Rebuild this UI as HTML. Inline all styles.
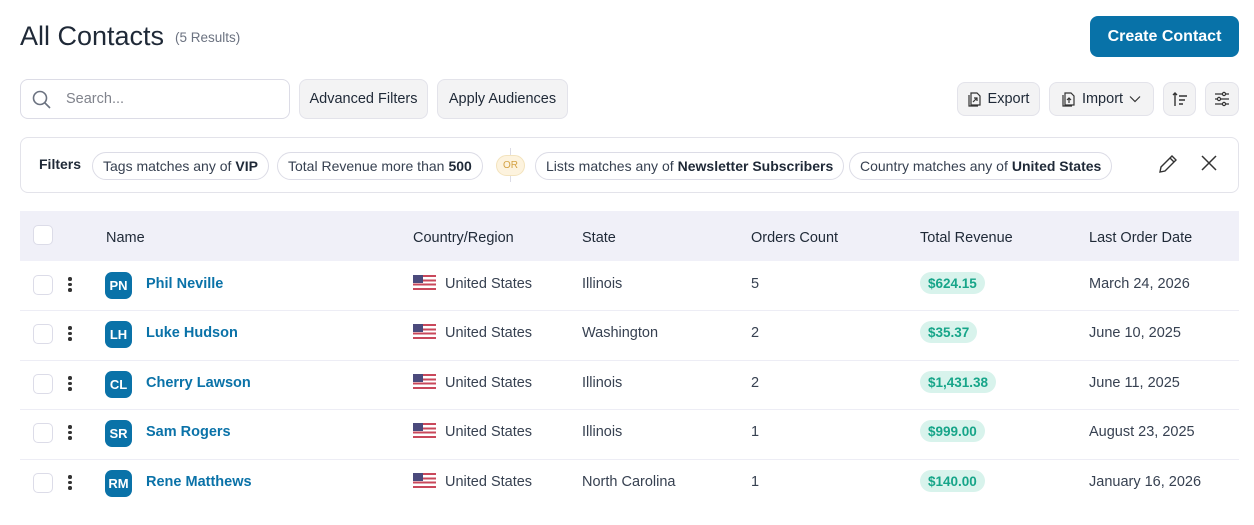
<!DOCTYPE html>
<html><head><style>
*{box-sizing:border-box;margin:0;padding:0}
body{width:1254px;height:525px;background:#fff;font-family:"Liberation Sans",sans-serif;color:#1f2937;position:relative;overflow:hidden}
.a{position:absolute}
.btn{position:absolute;background:#f3f3f4;border:1px solid #e3e3ea;border-radius:8px;font-size:14.5px;color:#1f2937;display:flex;align-items:center;justify-content:center;gap:6px}
.chip{position:absolute;top:152px;height:28px;border:1px solid #dcdce6;border-radius:14px;font-size:14px;color:#374151;display:flex;align-items:center;padding:0 10px;white-space:nowrap}
.chip b{color:#1f2937;margin-left:4px}
.cb{position:absolute;left:33px;width:20px;height:20px;border:1.5px solid #dcdce8;border-radius:5px;background:#fff}
.dots{position:absolute;left:68px;width:4px}
.dots i{display:block;width:3.5px;height:3.5px;background:#333;border-radius:50%;margin-bottom:2px}
.av{position:absolute;left:105px;width:27px;height:27px;background:#0a72a8;border-radius:7px;color:#fff;font-size:13px;font-weight:bold;display:flex;align-items:center;justify-content:center}
.nm{position:absolute;left:146px;color:#0a72a8;font-size:14.5px;font-weight:bold;margin-top:1px}
.t{position:absolute;font-size:14.5px;color:#374151;margin-top:1px}
.flag{position:absolute;left:413px;width:23px;height:15px;background:repeating-linear-gradient(#c9485b 0 2.14px,#fff 2.14px 4.28px)}
.flag:before{content:"";position:absolute;left:0;top:0;width:10px;height:8px;background:#4b4a7c}
.rev{position:absolute;left:920px;height:22px;padding:0 8px;background:#d8f3ec;border-radius:11px;color:#17a589;font-size:13.5px;font-weight:bold;display:flex;align-items:center}
.line{position:absolute;left:20px;width:1219px;height:1px;background:#ededf5}
.th{position:absolute;top:230px;font-size:14.5px;color:#1f2937}
</style></head><body>
<div class="a" style="left:20px;top:21px;font-size:27px;color:#1f2937">All Contacts</div>
<div class="a" style="left:175px;top:30px;font-size:13.5px;color:#6b7280">(5 Results)</div>
<div class="a" style="left:1090px;top:16px;width:149px;height:41px;background:#0872a8;border-radius:8px;color:#fff;font-size:16px;font-weight:bold;display:flex;align-items:center;justify-content:center">Create Contact</div>

<div class="a" style="left:20px;top:79px;width:270px;height:40px;border:1px solid #dcdce6;border-radius:8px"></div>
<svg class="a" style="left:30px;top:88px" width="24" height="24" viewBox="0 0 24 24" fill="none" stroke="#6b7280" stroke-width="1.6"><circle cx="10" cy="10" r="6.5"/><path d="M15 15l5 5"/></svg>
<div class="a" style="left:66px;top:91px;font-size:14.5px;color:#80838c">Search...</div>
<div class="btn" style="left:299px;top:79px;width:129px;height:40px">Advanced Filters</div>
<div class="btn" style="left:437px;top:79px;width:131px;height:40px">Apply Audiences</div>

<div class="btn" style="left:957px;top:82px;width:83px;height:34px"><svg width="14" height="16" viewBox="0 0 14 16" fill="none" stroke="#333" stroke-width="1.2"><path d="M3 2h6l3 3v9H3z"/><path d="M1 4v11h9"/><path d="M5 11l4-4M6 7h3v3"/></svg>Export</div>
<div class="btn" style="left:1049px;top:82px;width:105px;height:34px"><svg width="14" height="16" viewBox="0 0 14 16" fill="none" stroke="#333" stroke-width="1.2"><path d="M3 2h6l3 3v9H3z"/><path d="M1 4v11h9"/><path d="M7 12V7M5 9l2-2 2 2"/></svg>Import<svg width="12" height="8" viewBox="0 0 12 8" fill="none" stroke="#333" stroke-width="1.2"><path d="M1 1.5l5 5 5-5"/></svg></div>
<div class="btn" style="left:1163px;top:82px;width:33px;height:34px"><svg width="18" height="18" viewBox="0 0 18 18" fill="none" stroke="#333" stroke-width="1.4"><path d="M4 3v13M2 5l2-2 2 2M8 6h8M8 10h6M8 14h4"/></svg></div>
<div class="btn" style="left:1205px;top:82px;width:34px;height:34px"><svg width="18" height="18" viewBox="0 0 18 18" fill="none" stroke="#333" stroke-width="1.2"><path d="M2 4h14M2 9h14M2 14h14"/><circle cx="11" cy="4" r="1.6" fill="#f3f3f4"/><circle cx="6" cy="9" r="1.6" fill="#f3f3f4"/><circle cx="11" cy="14" r="1.6" fill="#f3f3f4"/></svg></div>

<div class="a" style="left:20px;top:137px;width:1219px;height:56px;border:1px solid #e3e3ea;border-radius:8px"></div>
<div class="a" style="left:39px;top:156px;font-size:14px;font-weight:bold;color:#1f2937">Filters</div>
<div class="chip" style="left:92px">Tags matches any of<b>VIP</b></div>
<div class="chip" style="left:277px">Total Revenue more than<b>500</b></div>
<div class="a" style="left:510px;top:148px;width:1px;height:34px;background:#dcdce6"></div>
<div class="a" style="left:496px;top:155px;width:29px;height:21px;border-radius:11px;background:#fdf3de;border:1px solid #f3e3bd;color:#d4a244;font-size:10px;display:flex;align-items:center;justify-content:center">OR</div>
<div class="chip" style="left:535px">Lists matches any of<b>Newsletter Subscribers</b></div>
<div class="chip" style="left:849px">Country matches any of<b>United States</b></div>
<svg class="a" style="left:1156px;top:152px" width="24" height="24" viewBox="0 0 24 24" fill="none" stroke="#333" stroke-width="1.4"><path d="M4 20l1-5L16 4l4 4L9 19z"/><path d="M14 6l4 4"/></svg>
<svg class="a" style="left:1199px;top:153px" width="20" height="20" viewBox="0 0 20 20" fill="none" stroke="#333" stroke-width="1.5"><path d="M3 3l14 14M17 3L3 17"/></svg>

<div class="a" style="left:20px;top:211px;width:1219px;height:50px;background:#f0f0f8"></div>
<div class="cb" style="top:225px"></div>
<div class="th" style="left:106px">Name</div>
<div class="th" style="left:413px">Country/Region</div>
<div class="th" style="left:582px">State</div>
<div class="th" style="left:751px">Orders Count</div>
<div class="th" style="left:920px">Total Revenue</div>
<div class="th" style="left:1089px">Last Order Date</div>

<div class="cb" style="top:275px"></div><div class="dots" style="top:277px"><i></i><i></i><i></i></div><div class="av" style="top:272px">PN</div><div class="nm" style="top:275px">Phil Neville</div><div class="flag" style="top:275px"></div><div class="t" style="left:445px;top:275px">United States</div><div class="t" style="left:582px;top:275px">Illinois</div><div class="t" style="left:751px;top:275px">5</div><div class="rev" style="top:272px">$624.15</div><div class="t" style="left:1089px;top:275px">March 24, 2026</div>
<div class="line" style="top:310px"></div>
<div class="cb" style="top:324px"></div><div class="dots" style="top:326px"><i></i><i></i><i></i></div><div class="av" style="top:321px">LH</div><div class="nm" style="top:324px">Luke Hudson</div><div class="flag" style="top:324px"></div><div class="t" style="left:445px;top:324px">United States</div><div class="t" style="left:582px;top:324px">Washington</div><div class="t" style="left:751px;top:324px">2</div><div class="rev" style="top:321px">$35.37</div><div class="t" style="left:1089px;top:324px">June 10, 2025</div>
<div class="line" style="top:360px"></div>
<div class="cb" style="top:374px"></div><div class="dots" style="top:376px"><i></i><i></i><i></i></div><div class="av" style="top:371px">CL</div><div class="nm" style="top:374px">Cherry Lawson</div><div class="flag" style="top:374px"></div><div class="t" style="left:445px;top:374px">United States</div><div class="t" style="left:582px;top:374px">Illinois</div><div class="t" style="left:751px;top:374px">2</div><div class="rev" style="top:371px">$1,431.38</div><div class="t" style="left:1089px;top:374px">June 11, 2025</div>
<div class="line" style="top:409px"></div>
<div class="cb" style="top:423px"></div><div class="dots" style="top:425px"><i></i><i></i><i></i></div><div class="av" style="top:420px">SR</div><div class="nm" style="top:423px">Sam Rogers</div><div class="flag" style="top:423px"></div><div class="t" style="left:445px;top:423px">United States</div><div class="t" style="left:582px;top:423px">Illinois</div><div class="t" style="left:751px;top:423px">1</div><div class="rev" style="top:420px">$999.00</div><div class="t" style="left:1089px;top:423px">August 23, 2025</div>
<div class="line" style="top:459px"></div>
<div class="cb" style="top:473px"></div><div class="dots" style="top:475px"><i></i><i></i><i></i></div><div class="av" style="top:470px">RM</div><div class="nm" style="top:473px">Rene Matthews</div><div class="flag" style="top:473px"></div><div class="t" style="left:445px;top:473px">United States</div><div class="t" style="left:582px;top:473px">North Carolina</div><div class="t" style="left:751px;top:473px">1</div><div class="rev" style="top:470px">$140.00</div><div class="t" style="left:1089px;top:473px">January 16, 2026</div>
</body></html>
